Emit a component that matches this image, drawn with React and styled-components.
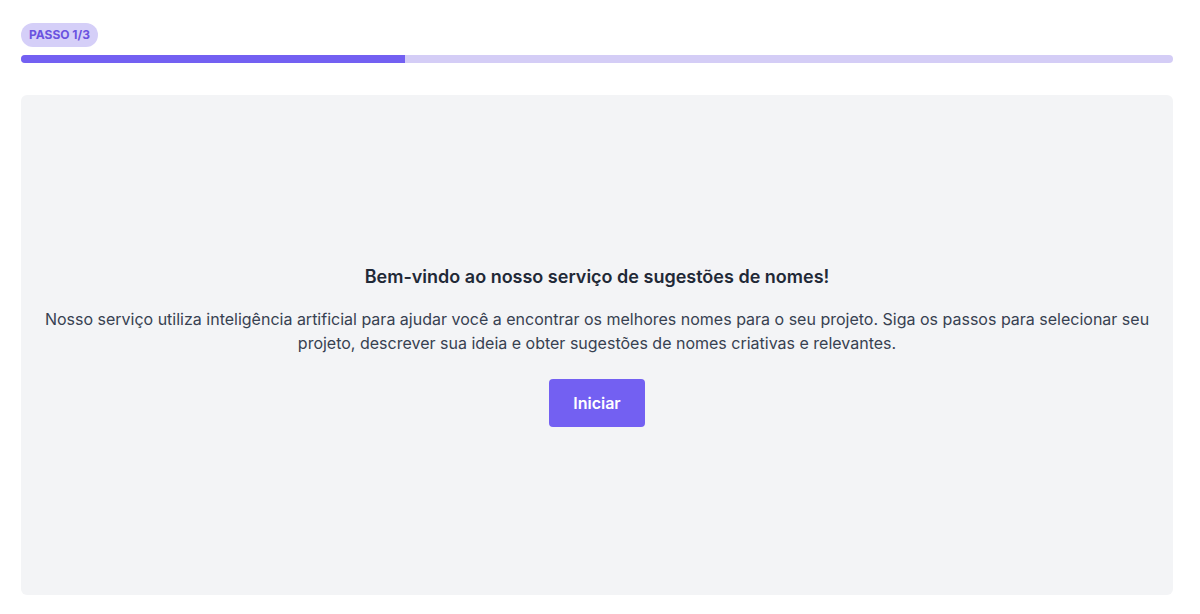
import React from "react";
import styled, { createGlobalStyle } from "styled-components";

const GlobalStyle = createGlobalStyle`
  html, body { margin: 0; padding: 0; background: #ffffff; }
  body { font-family: Inter, "Noto Sans", sans-serif; -webkit-font-smoothing: antialiased; }
  * { box-sizing: border-box; }
`;

const Page = styled.div`
  width: 1152px;
  margin-left: 21px;
  padding-top: 23px;
  display: flex;
  flex-direction: column;
`;

const Badge = styled.span`
  align-self: flex-start;
  background: #d5cff8;
  color: #6a52e0;
  font-size: 12px;
  font-weight: 700;
  line-height: 16px;
  padding: 4px 8px;
  border-radius: 9999px;
  text-transform: uppercase;
`;

const Track = styled.div`
  margin-top: 8px;
  height: 8px;
  border-radius: 9999px;
  background: #d4cdf6;
  overflow: hidden;
`;

const Fill = styled.div`
  height: 100%;
  background: #7360f2;
`;

const Card = styled.div`
  margin-top: 32px;
  height: 500px;
  background: #f3f4f6;
  border-radius: 6px;
  display: flex;
  flex-direction: column;
  align-items: center;
  justify-content: center;
  text-align: center;
  padding: 0 16px;
`;

const Title = styled.h2`
  margin: 0;
  font-size: 18px;
  font-weight: 600;
  line-height: 28px;
  color: #1f2937;
`;

const Text = styled.p`
  margin: 16px 0 0;
  font-size: 16px;
  line-height: 24px;
  color: #374151;
`;

const Button = styled.button`
  margin-top: 24px;
  width: 96px;
  height: 48px;
  border: none;
  border-radius: 4px;
  background: #7360f2;
  color: #ffffff;
  font-family: inherit;
  font-size: 16px;
  font-weight: 600;
  cursor: pointer;
`;

export default function App() {
  const step = 1;
  const total = 3;
  return (
    <>
      <GlobalStyle />
      <Page>
        <Badge>Passo {step}/{total}</Badge>
        <Track>
          <Fill style={{ width: `${(step / total) * 100}%` }} />
        </Track>
        <Card>
          <Title>Bem-vindo ao nosso serviço de sugestões de nomes!</Title>
          <Text>
            Nosso serviço utiliza inteligência artificial para ajudar você a encontrar os melhores nomes para o seu projeto. Siga os passos para selecionar seu projeto, descrever sua ideia e obter sugestões de nomes criativas e relevantes.
          </Text>
          <Button>Iniciar</Button>
        </Card>
      </Page>
    </>
  );
}
